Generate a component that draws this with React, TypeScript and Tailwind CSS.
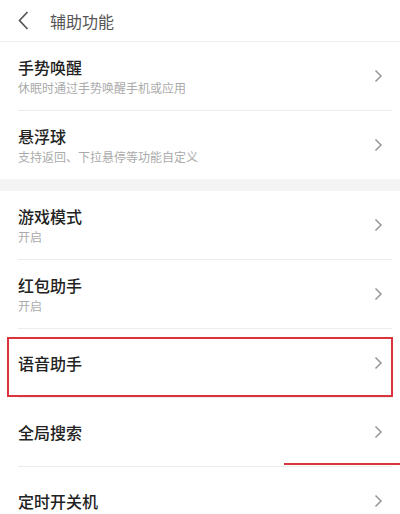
type Item = {title: string; sub?: string; mark?: 'box' | 'line'};

const groupA: Item[] = [
  {title: '手势唤醒', sub: '休眠时通过手势唤醒手机或应用'},
  {title: '悬浮球', sub: '支持返回、下拉悬停等功能自定义'},
];

const groupB: Item[] = [
  {title: '游戏模式', sub: '开启'},
  {title: '红包助手', sub: '开启'},
  {title: '语音助手', mark: 'box'},
  {title: '全局搜索', mark: 'line'},
  {title: '定时开关机'},
];

function Chevron() {
  return (
    <svg width="9" height="14" viewBox="0 0 9 14" className="text-[#9a9a9a]">
      <polyline points="1.5,1.5 7,7 1.5,12.5" fill="none" stroke="currentColor" strokeWidth="1.6" />
    </svg>
  );
}

function Row({item, last}: {item: Item; last: boolean}) {
  return (
    <div className="relative">
      <div className="flex h-[68px] items-center pl-[18px] pr-[17px]">
        <div className="flex flex-1 flex-col">
          <span className="text-[16px] leading-[20px] font-medium text-[#222]">{item.title}</span>
          {item.sub && (
            <span className="mt-[4px] text-[12px] leading-[14px] text-[#ababab]">{item.sub}</span>
          )}
        </div>
        <Chevron />
      </div>
      {!last && <div className="ml-[18px] mr-[8px] h-px bg-[#ececec]" />}
      {item.mark === 'box' && (
        <div className="absolute left-[7px] right-[7px] top-[8px] bottom-[1px] border-2 border-[#d9343d]" />
      )}
      {item.mark === 'line' && (
        <div className="absolute bottom-[2px] left-[284px] right-0 h-[2px] bg-[#d9343d]" />
      )}
    </div>
  );
}

export default function App() {
  return (
    <div
      className="h-[514px] w-[400px] overflow-hidden bg-white"
      style={{fontFamily: '"Noto Sans CJK SC", "Noto Sans", sans-serif'}}
    >
      <header className="flex h-[42px] items-center border-b border-[#eeeeee] pl-[18px]">
        <svg width="11" height="19" viewBox="0 0 11 19" className="text-[#555]">
          <polyline points="9.5,1 1.5,9.5 9.5,18" fill="none" stroke="currentColor" strokeWidth="1.7" />
        </svg>
        <span className="ml-[21px] text-[16px] text-[#555]">辅助功能</span>
      </header>
      <div>
        {groupA.map((item, i) => (
          <Row key={item.title} item={item} last={i === groupA.length - 1} />
        ))}
      </div>
      <div className="h-[12px] bg-[#f4f4f4]" />
      <div>
        {groupB.map((item, i) => (
          <Row key={item.title} item={item} last={i === groupB.length - 1} />
        ))}
      </div>
    </div>
  );
}
